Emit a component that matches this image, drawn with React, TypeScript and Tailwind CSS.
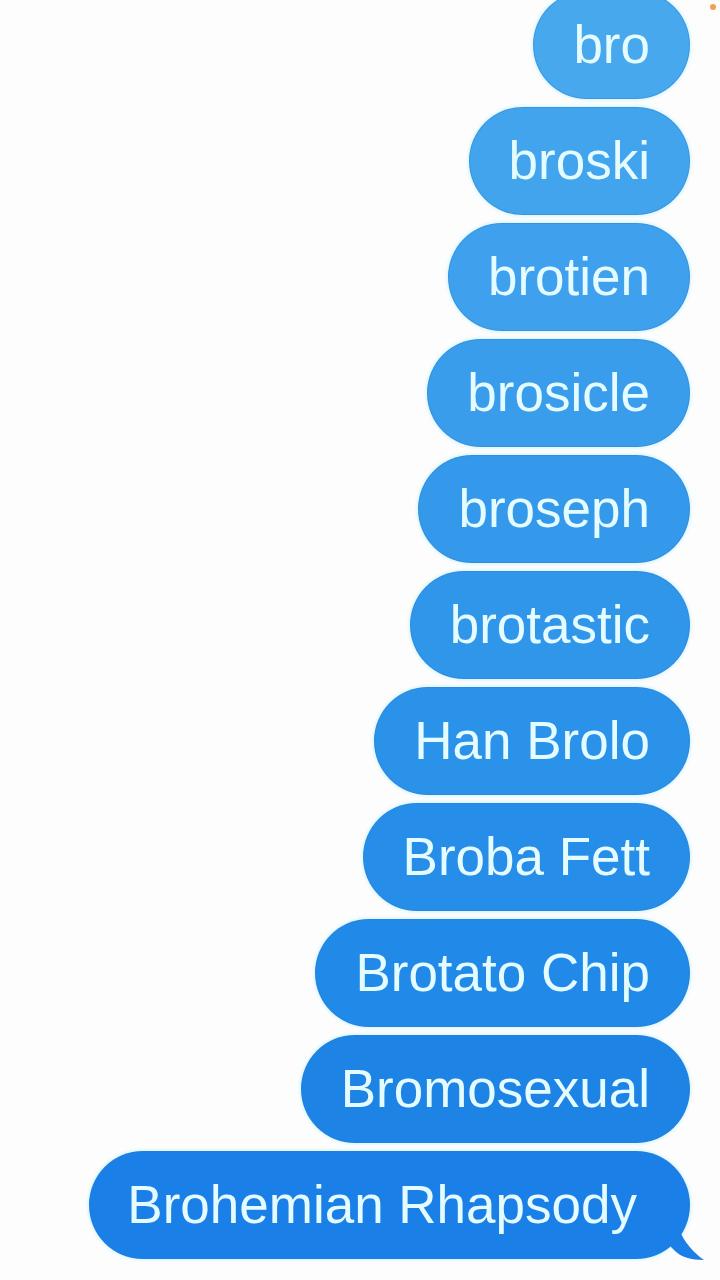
const messages: { text: string; color: string }[] = [
  { text: 'bro', color: 'bg-[#47a8ee]' },
  { text: 'broski', color: 'bg-[#43a4ee]' },
  { text: 'brotien', color: 'bg-[#3fa1ed]' },
  { text: 'brosicle', color: 'bg-[#3a9dec]' },
  { text: 'broseph', color: 'bg-[#3599eb]' },
  { text: 'brotastic', color: 'bg-[#3096ea]' },
  { text: 'Han Brolo', color: 'bg-[#2b92e9]' },
  { text: 'Broba Fett', color: 'bg-[#268ee8]' },
  { text: 'Brotato Chip', color: 'bg-[#2189e7]' },
  { text: 'Bromosexual', color: 'bg-[#1d84e6]' },
  { text: 'Brohemian Rhapsody', color: 'bg-[#1a7fe6]' }
];

const Bubble = ({ text, color, last }: { text: string; color: string; last: boolean }) => (
  <div className="relative">
    <div
      className={`${color} h-[108px] rounded-full flex items-center border border-[#2a7fc8]/40 shadow-[0_0_4px_#b8ecff] ${
        last ? 'pl-[37px] pr-[52px]' : 'px-[39px]'
      }`}
    >
      <span className="text-[53px] leading-none text-[#e4fbff] whitespace-nowrap pb-[2px]">{text}</span>
    </div>
    {last && (
      <svg
        className="absolute right-[-15px] bottom-[-2px]"
        width="34"
        height="50"
        viewBox="0 0 34 50"
      >
        <path d="M0 0 C8 18 12 34 33 49 C20 49 10 46 4 40 L0 36 Z" fill="#1a7fe6" />
      </svg>
    )}
  </div>
);

export default function App() {
  return (
    <div className="relative w-[720px] h-[1280px] overflow-hidden bg-[#fdfdfd] font-['Liberation_Sans',Arial,sans-serif]">
      <div className="absolute right-[4px] top-[4px] w-[6px] h-[6px] rounded-full bg-[#f0a24e]" />
      <div className="flex flex-col items-end gap-[8px] pr-[30px] mt-[-9px]">
        {messages.map((m, i) => (
          <Bubble key={m.text} text={m.text} color={m.color} last={i === messages.length - 1} />
        ))}
      </div>
    </div>
  );
}
